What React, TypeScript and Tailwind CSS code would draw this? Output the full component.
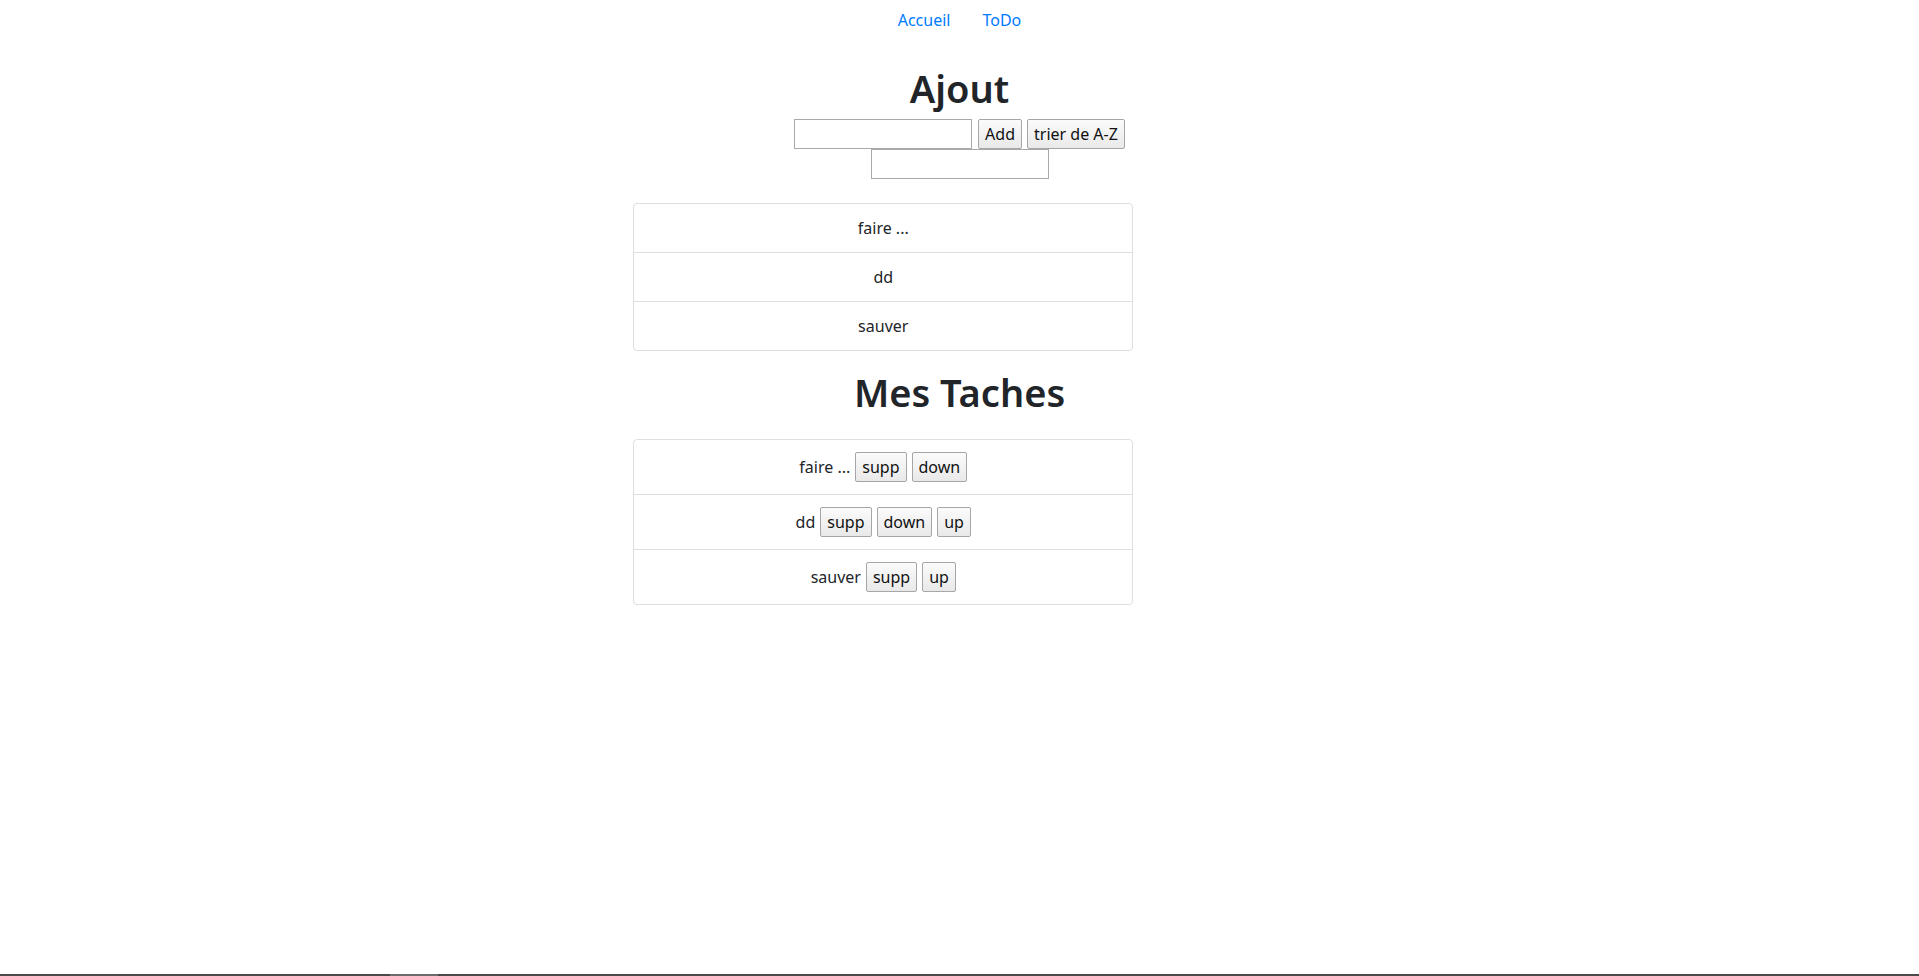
import React from "react";

const font = { fontFamily: '"Noto Sans", "Open Sans", sans-serif' };

function Btn({ children }: { children: React.ReactNode }) {
  return (
    <button className="h-[30px] px-[6px] border border-[#a6a6a6] rounded-[2px] bg-gradient-to-b from-[#fbfbfb] to-[#e9e9e9] text-[#111] text-base leading-6">
      {children}
    </button>
  );
}

const tasks = [
  { name: "faire ...", down: true, up: false },
  { name: "dd", down: true, up: true },
  { name: "sauver", down: false, up: true },
];

export default function App() {
  return (
    <div className="h-[976px] flex flex-col bg-white text-[#212529]" style={font}>
      <div className="flex-1">
        <nav className="flex justify-center">
          <a className="px-4 py-2 text-base leading-6 text-[#007bff]" href="#">Accueil</a>
          <a className="px-4 py-2 text-base leading-6 text-[#007bff]" href="#">ToDo</a>
        </nav>

        <h1 className="mt-[24px] mb-[7px] text-center text-[38px] leading-[48px] font-semibold">Ajout</h1>
        <div className="flex justify-center items-center">
          <input className="w-[178px] h-[30px] border border-[#a9a9a9] outline-none" />
          <div className="ml-[6px]"><Btn>Add</Btn></div>
          <div className="ml-[5px]"><Btn>trier de A-Z</Btn></div>
        </div>
        <div className="flex justify-center">
          <input className="w-[178px] h-[30px] border border-[#a9a9a9] outline-none" />
        </div>

        <ul className="mt-[24px] ml-[33%] w-[500px] border border-[#dfdfdf] rounded-[4px]">
          {tasks.map((t, i) => (
            <li key={t.name} className={`py-3 px-5 text-center text-base leading-6 ${i > 0 ? "border-t border-[#dfdfdf]" : ""}`}>
              {t.name}
            </li>
          ))}
        </ul>

        <h1 className="mt-[17px] mb-[23px] text-center text-[38px] leading-[48px] font-semibold">Mes Taches</h1>

        <ul className="ml-[33%] w-[500px] border border-[#dfdfdf] rounded-[4px]">
          {tasks.map((t, i) => (
            <li key={t.name} className={`py-3 px-5 flex justify-center items-center gap-[5px] text-base leading-6 ${i > 0 ? "border-t border-[#dfdfdf]" : ""}`}>
              <span>{t.name}</span>
              <Btn>supp</Btn>
              {t.down && <Btn>down</Btn>}
              {t.up && <Btn>up</Btn>}
            </li>
          ))}
        </ul>
      </div>
      <div className="h-[2px] bg-[#4a4a4a] flex">
        <div className="ml-[390px] w-[48px] bg-[#6b6b6b]" />
      </div>
    </div>
  );
}
